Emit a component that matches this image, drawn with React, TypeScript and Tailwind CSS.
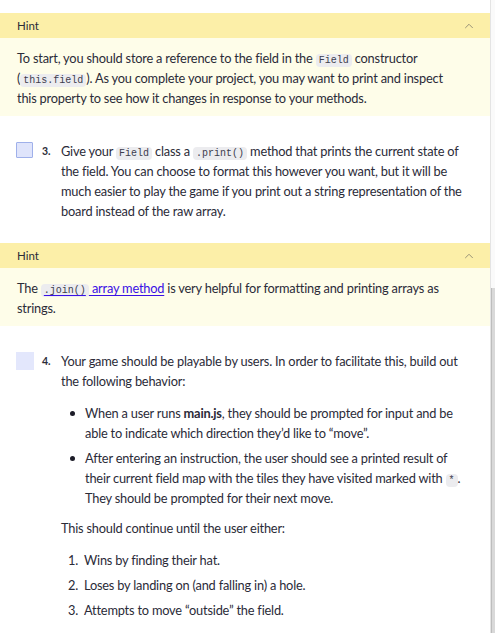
import { ChevronUp } from "lucide-react"

const font = { fontFamily: "Lato, 'Open Sans', sans-serif" }

function Code({ children }: { children: string }) {
  return (
    <code className="bg-[#ececef] text-[#3d3d4e] px-[3px] py-[1px] rounded-sm font-['Liberation_Mono',monospace] text-[10px] leading-none tracking-normal">
      {children}
    </code>
  )
}

function Hint({ children }: { children: React.ReactNode }) {
  return (
    <div>
      <div className="h-[25px] bg-[#fcefa8] flex items-center justify-between pl-[17px] pr-[14px]">
        <span className="text-[11.5px] text-[#2b2b38]">Hint</span>
        <ChevronUp className="w-[14px] h-[14px] text-[#8a8670]" strokeWidth={1.5} />
      </div>
      <div className="bg-[#fefde9] pl-[17px] pr-[30px] pt-[10px] pb-[8px] text-[12.8px] tracking-[-0.2px] leading-[20px] text-[#2b2b38]">
        {children}
      </div>
    </div>
  )
}

export default function App() {
  return (
    <div className="w-[495px] h-[633px] overflow-hidden bg-white flex" style={font}>
      <div className="w-[490px] pt-[13px]">
        <Hint>
          <p>
            To start, you should store a reference to the field in the <Code>Field</Code> constructor
            (<Code>this.field</Code>). As you complete your project, you may want to print and inspect
            this property to see how it changes in response to your methods.
          </p>
        </Hint>

        {/* step 3 */}
        <div className="flex pt-[25px] pb-[22px] text-[12.8px] tracking-[-0.2px] leading-[20px] text-[#2b2b38]">
          <div className="w-[42px] pl-[16px] pt-[1px] shrink-0">
            <div className="w-[17px] h-[16px] bg-[#dfe4fb] border border-[#9fb0ea] rounded-[1px]" />
          </div>
          <div className="w-[19px] text-[10.5px] font-bold shrink-0">3.</div>
          <p className="pr-[22px]">
            Give your <Code>Field</Code> class a <Code>.print()</Code> method that prints the current state of
            the field. You can choose to format this however you want, but it will be much easier to play the
            game if you print out a string representation of the board instead of the raw array.
          </p>
        </div>

        <Hint>
          <p>
            The <a className="text-[#3a10e5] underline underline-offset-2"><Code>.join()</Code> array method</a> is
            very helpful for formatting and printing arrays as strings.
          </p>
        </Hint>

        {/* step 4 */}
        <div className="flex pt-[25px] text-[12.8px] tracking-[-0.2px] leading-[20px] text-[#2b2b38]">
          <div className="w-[42px] pl-[16px] pt-[1px] shrink-0">
            <div className="w-[18px] h-[18px] bg-[#e3e7fc]" />
          </div>
          <div className="w-[19px] text-[10.5px] font-bold shrink-0">4.</div>
          <div className="pr-[22px]">
            <p>
              Your game should be playable by users. In order to facilitate this, build out the following
              behavior:
            </p>
            <ul className="mt-[12px] pl-[9px] space-y-[5px]">
              <li className="flex gap-[10px]">
                <span className="mt-[8px] w-[5px] h-[5px] rounded-full bg-[#1c1c28] shrink-0" />
                <span>
                  When a user runs <b>main.js</b>, they should be prompted for input and be able to indicate
                  which direction they’d like to “move”.
                </span>
              </li>
              <li className="flex gap-[10px]">
                <span className="mt-[8px] w-[5px] h-[5px] rounded-full bg-[#1c1c28] shrink-0" />
                <span>
                  After entering an instruction, the user should see a printed result of their current field
                  map with the tiles they have visited marked with <Code>*</Code>. They should be prompted for
                  their next move.
                </span>
              </li>
            </ul>
            <p className="mt-[10px]">This should continue until the user either:</p>
            <ol className="mt-[12px] pl-[7px] space-y-[5px]">
              <li className="flex"><span className="w-[16px]">1.</span>Wins by finding their hat.</li>
              <li className="flex"><span className="w-[16px]">2.</span>Loses by landing on (and falling in) a hole.</li>
              <li className="flex"><span className="w-[16px]">3.</span>Attempts to move “outside” the field.</li>
            </ol>
          </div>
        </div>
      </div>

      {/* scrollbar */}
      <div className="w-[5px] border-l border-[#e4e4e4] bg-[#fafafa] pt-[288px]">
        <div className="h-full bg-[#d9d9d9] border-l border-[#bdbdbd]" />
      </div>
    </div>
  )
}
